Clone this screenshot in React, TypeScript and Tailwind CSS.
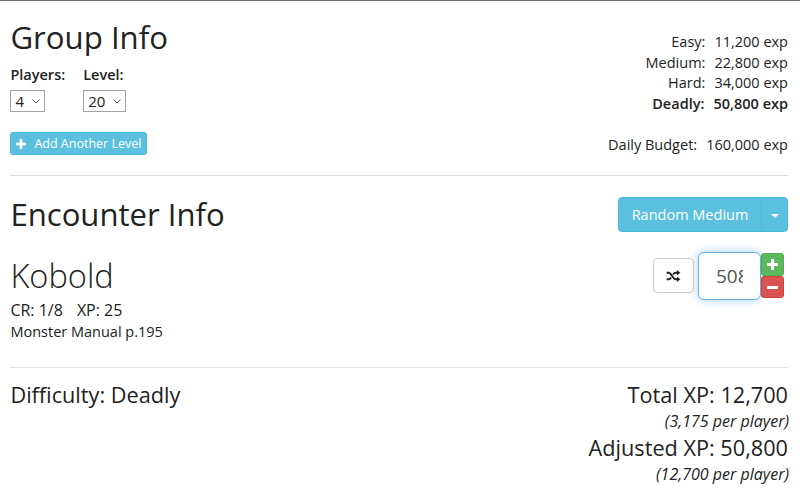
import React from 'react';

interface Threshold {
  label: string;
  exp: string;
  active?: boolean;
}

const thresholds: Threshold[] = [
  { label: 'Easy', exp: '11,200' },
  { label: 'Medium', exp: '22,800' },
  { label: 'Hard', exp: '34,000' },
  { label: 'Deadly', exp: '50,800', active: true },
];

const PlusIcon = ({ className }: { className: string }) => (
  <svg className={className} viewBox="0 0 11 11" fill="currentColor">
    <path d="M4.6 0h1.8q.6 0 .6.6V4h3.4q.6 0 .6.6v1.8q0 .6-.6.6H7v3.4q0 .6-.6.6H4.6q-.6 0-.6-.6V7H.6Q0 7 0 6.4V4.6Q0 4 .6 4H4V.6q0-.6.6-.6z" />
  </svg>
);

const MinusIcon = ({ className }: { className: string }) => (
  <svg className={className} viewBox="0 0 11 11" fill="currentColor">
    <rect y="4" width="11" height="3" rx=".6" />
  </svg>
);

const ShuffleIcon = ({ className }: { className: string }) => (
  <svg className={className} viewBox="0 0 16 14" fill="none" stroke="currentColor" strokeWidth="2.2">
    <path d="M0 3.2h2.2C5.8 3.2 7 10.8 10.6 10.8H12.5" />
    <path d="M0 10.8h2.2c1.3 0 2.2-.8 3-2.1M7.5 5.3c.8-1.3 1.7-2.1 3.1-2.1h1.9" />
    <path d="M12 0l4 3.2-4 3.2zM12 7.6l4 3.2-4 3.2z" fill="currentColor" stroke="none" />
  </svg>
);

const Picker = ({ label, value, className }: { label: string; value: string; className: string }) => (
  <div>
    <div className="h-[22px] text-[14.5px] leading-[22px] font-semibold whitespace-nowrap">{label}</div>
    <button className={`mt-[4px] flex h-[22px] items-center justify-between border border-[#a3a3a3] bg-white pl-[4px] pr-[4px] text-[15px] leading-5 ${className}`}>
      {value}
      <svg className="h-[5px] w-[8px]" viewBox="0 0 8 5" fill="none" stroke="#555" strokeWidth="1">
        <path d="M.5.5 4 4 7.5.5" />
      </svg>
    </button>
  </div>
);

const GroupInfo = () => (
  <section className="flex h-[175px] justify-between border-b border-[#dcdcdc]">
    <div className="pt-[17px]">
      <h2 className="h-[38px] text-[31.2px] leading-[38px] whitespace-nowrap">Group Info</h2>
      <div className="mt-[8px] flex gap-[18px]">
        <Picker label="Players:" value="4" className="w-[35px]" />
        <Picker label="Level:" value="20" className="w-[43px]" />
      </div>
      <button className="mt-[20px] flex h-[23px] w-[137px] items-center rounded-[3px] border border-[#46b8da] bg-[#5bc0de] pl-[5px] text-[12.5px] leading-5 whitespace-nowrap text-white">
        <PlusIcon className="mr-[8px] h-[10px] w-[10px]" />
        Add Another Level
      </button>
    </div>
    <div className="pt-[31px] text-right text-[14.5px] leading-[20.6px] whitespace-nowrap">
      {thresholds.map((t) => (
        <div key={t.label} className={`flex justify-end gap-[9px] ${t.active ? 'font-semibold' : ''}`}>
          <span>{t.label}:</span>
          <span>{t.exp} exp</span>
        </div>
      ))}
      <div className="mt-[20.6px] flex justify-end gap-[9px]">
        <span>Daily Budget:</span>
        <span>160,000 exp</span>
      </div>
    </div>
  </section>
);

const Monster = () => (
  <div className="flex justify-between">
    <div className="pt-[23px] whitespace-nowrap">
      <h3 className="h-[40px] text-[32.6px] leading-[40px] font-light">Kobold</h3>
      <div className="mt-[4px] flex gap-[14px] text-[16px] leading-[21px]">
        <span>CR: 1/8</span>
        <span>XP: 25</span>
      </div>
      <div className="text-[14.5px] leading-[22px]">Monster Manual p.195</div>
    </div>
    <div className="flex items-start pt-[19px] pr-[4.5px]">
      <button className="mt-[6px] flex h-[35px] w-[41px] items-center justify-center rounded-[4px] border border-[#ccc] bg-white">
        <ShuffleIcon className="h-[12px] w-[15px]" />
      </button>
      <div className="ml-[4px] flex h-[48px] w-[62.5px] items-center rounded-[6px] border border-[#66afe9] bg-white pl-[17px] text-[19px] text-[#555] shadow-[0_0_8px_rgba(102,175,233,0.6)]">
        <span className="w-[27px] overflow-hidden leading-[26px]">508</span>
      </div>
      <div className="flex flex-col pt-[1px]">
        <button className="flex h-[23px] w-[23px] items-center justify-center rounded-[3px] border border-[#4cae4c] bg-[#5cb85c] text-white">
          <PlusIcon className="h-[11px] w-[11px]" />
        </button>
        <button className="flex h-[22px] w-[23px] items-center justify-center rounded-[3px] border border-[#d43f3a] bg-[#d9534f] text-white">
          <MinusIcon className="h-[11px] w-[11px]" />
        </button>
      </div>
    </div>
  </div>
);

const EncounterInfo = () => (
  <section className="h-[192px] border-b border-[#e2e2e2]">
    <div className="flex h-[57px] justify-between pt-[20px]">
      <h2 className="-mt-px h-[38px] text-[31.1px] leading-[38px] whitespace-nowrap">Encounter Info</h2>
      <div className="mt-px flex h-[35px] w-[170px] rounded-[4px] border border-[#46b8da] bg-[#5bc0de] text-[14.5px] text-white">
        <button className="flex-1 border-r border-[#46b8da] pt-[1px] whitespace-nowrap">Random Medium</button>
        <button className="flex w-[25px] items-center justify-center pt-[3px]">
          <svg className="h-[4px] w-[8px]" viewBox="0 0 8 4" fill="currentColor">
            <path d="M0 0h8L4 4z" />
          </svg>
        </button>
      </div>
    </div>
    <Monster />
  </section>
);

const Totals = () => (
  <section className="flex justify-between pt-[12px] text-[21.7px] leading-[30px] whitespace-nowrap">
    <div>Difficulty: Deadly</div>
    <div className="text-right">
      <div>Total XP: 12,700</div>
      <div className="-mr-px text-[16px] leading-[23px] italic">(3,175 per player)</div>
      <div>Adjusted XP: 50,800</div>
      <div className="-mr-px text-[16px] leading-[23px] italic">(12,700 per player)</div>
    </div>
  </section>
);

const App: React.FC = () => {
  return (
    <main className="h-[489px] overflow-hidden border-t border-[#6d6b6d] bg-white pr-[12px] pl-[10.4px] font-['Open_Sans',sans-serif] text-[#222]">
      <GroupInfo />
      <EncounterInfo />
      <Totals />
    </main>
  );
};

export default App;
